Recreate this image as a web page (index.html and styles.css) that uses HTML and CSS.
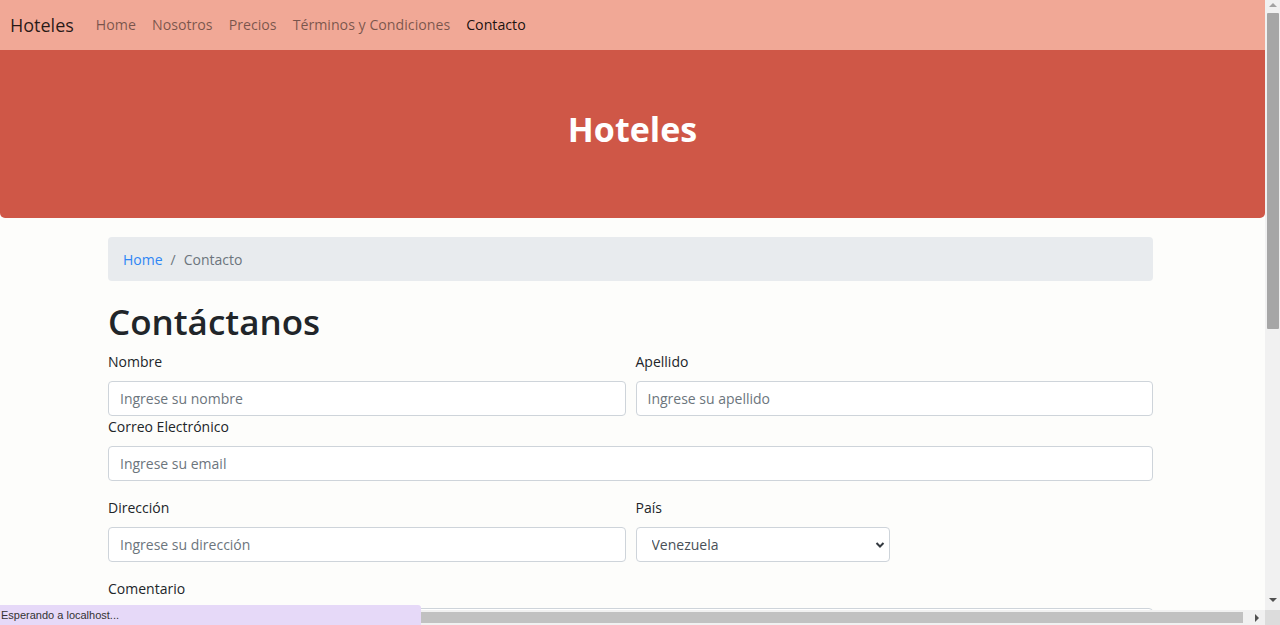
FILE: index.html
```html
<!DOCTYPE html>
<html lang="es">
<head>
<meta charset="utf-8">
<title>Hoteles - Contacto</title>
<link rel="stylesheet" href="styles.css">
</head>
<body>
<div class="window">
  <div class="viewport">
    <nav class="navbar">
      <a class="brand" href="#">Hoteles</a>
      <ul class="nav">
        <li><a class="nav-link" href="#">Home</a></li>
        <li><a class="nav-link" href="#">Nosotros</a></li>
        <li><a class="nav-link" href="#">Precios</a></li>
        <li><a class="nav-link" href="#">Términos y Condiciones</a></li>
        <li><a class="nav-link active" href="#">Contacto</a></li>
      </ul>
    </nav>
    <header class="hero">
      <h1 class="hero-title">Hoteles</h1>
    </header>
    <main class="container">
      <ol class="breadcrumb">
        <li><a href="#">Home</a></li>
        <li class="sep">/</li>
        <li class="current">Contacto</li>
      </ol>
      <h1 class="page-title">Contáctanos</h1>
      <form class="form">
        <div class="row">
          <div class="field">
            <label for="nombre">Nombre</label>
            <input id="nombre" type="text" placeholder="Ingrese su nombre">
          </div>
          <div class="field">
            <label for="apellido">Apellido</label>
            <input id="apellido" type="text" placeholder="Ingrese su apellido">
          </div>
        </div>
        <div class="field">
          <label for="email">Correo Electrónico</label>
          <input id="email" type="email" placeholder="Ingrese su email">
        </div>
        <div class="row group">
          <div class="field">
            <label for="direccion">Dirección</label>
            <input id="direccion" type="text" placeholder="Ingrese su dirección">
          </div>
          <div class="field">
            <label for="pais">País</label>
            <div class="select-wrap">
              <select id="pais">
                <option>Venezuela</option>
                <option>Colombia</option>
                <option>México</option>
              </select>
              <svg class="chev" width="10" height="8" viewBox="0 0 10 8"><path d="M1.5 2 L5 5.5 L8.5 2" fill="none" stroke="#343a40" stroke-width="2"/></svg>
            </div>
          </div>
        </div>
        <div class="field group">
          <label for="comentario">Comentario</label>
          <textarea id="comentario" rows="4"></textarea>
        </div>
      </form>
    </main>
  </div>
  <div class="vscroll">
    <span class="arrow up"></span>
    <span class="vthumb"></span>
    <span class="arrow down"></span>
  </div>
  <div class="hscroll">
    <span class="hthumb"></span>
    <span class="arrow right"></span>
  </div>
  <div class="corner"></div>
</div>
<div class="status">Esperando a localhost...</div>
</body>
</html>
```
FILE: styles.css
```css
* { box-sizing: border-box; }
html, body { margin: 0; padding: 0; height: 625px; overflow: hidden; }
body {
  font-family: "Open Sans", "Noto Sans", sans-serif;
  font-size: 14px;
  color: #212529;
  background: #fdfdfb;
}
.window {
  display: grid;
  grid-template-columns: 1265px 15px;
  grid-template-rows: 610px 15px;
  height: 625px;
}
.viewport { overflow: hidden; background: #fdfdfb; }

/* navbar */
.navbar {
  height: 50px;
  background: #f1a896;
  display: flex;
  align-items: center;
  padding: 0 10px 1px;
}
.brand {
  font-size: 18px;
  color: rgba(0,0,0,.85);
  text-decoration: none;
  margin-right: 14px;
}
.nav { list-style: none; margin: 0; padding: 0; display: flex; }
.nav-link {
  display: block;
  padding: 0 8px;
  color: rgba(0,0,0,.5);
  text-decoration: none;
  font-size: 14.2px;
}
.nav-link.active { color: rgba(0,0,0,.9); }

/* hero */
.hero {
  height: 168px;
  background: #cf5747;
  border-radius: 0 0 5px 5px;
  display: flex;
  align-items: center;
  justify-content: center;
  padding-bottom: 10px;
}
.hero-title {
  margin: 0;
  color: #fff;
  font-size: 34px;
  font-weight: 700;
}

/* container */
.container { width: 1045px; margin-left: 108px; }
.breadcrumb {
  list-style: none;
  margin: 19px 0 0;
  height: 44px;
  padding: 0 15px;
  background: #e8ebee;
  border-radius: 4px;
  display: flex;
  align-items: center;
  gap: 8px;
}
.breadcrumb a { color: #2f86f5; text-decoration: none; }
.breadcrumb .sep, .breadcrumb .current { color: #6c757d; }

.page-title {
  margin: 18px 0 7px;
  font-size: 35px;
  line-height: 45px;
  font-weight: 600;
  color: #212529;
}

.row { display: grid; grid-template-columns: 1fr 1fr; gap: 10px; }
.field { display: flex; flex-direction: column; }
.group { margin-top: 16px; }
label {
  display: block;
  line-height: 22px;
  margin-bottom: 8px;
  color: #212529;
}
input, textarea, select {
  font-family: inherit;
  font-size: 14px;
  color: #495057;
  background: #fff;
  border: 1px solid #ced4da;
  border-radius: 4px;
  outline: none;
}
input { height: 35px; padding: 0 11px; }
input::placeholder { color: #6c757d; }
textarea { height: 100px; resize: none; }
.select-wrap { position: relative; width: 254px; }
select {
  appearance: none;
  -webkit-appearance: none;
  width: 100%;
  height: 35px;
  padding: 0 15px;
}
.chev { position: absolute; right: 5px; top: 14px; }

/* fake scrollbars */
.vscroll {
  background: #f1f1f1;
  display: flex;
  flex-direction: column;
  align-items: center;
  padding: 3px 0;
}
.vthumb {
  width: 12px;
  height: 316px;
  margin-top: 6px;
  background: #a6a6a6;
  border-radius: 1px;
}
.arrow { width: 0; height: 0; border: 4px solid transparent; }
.arrow.up { border-bottom-color: #a3a3a3; border-top-width: 0; }
.arrow.down { border-top-color: #505050; border-bottom-width: 0; margin-top: auto; margin-bottom: 5px; }
.hscroll {
  background: #f1f1f1;
  display: flex;
  align-items: center;
  padding: 0 6px 0 0;
}
.hthumb {
  height: 11px;
  flex: 0 0 1243px;
  background: #c1c1c1;
}
.arrow.right { border-left-color: #505050; border-right-width: 0; margin-left: auto; }
.corner { background: #dcdcdc; }

.status {
  position: fixed;
  left: 0;
  bottom: 0;
  width: 421px;
  height: 20px;
  background: #e6d9f8;
  border-top-right-radius: 3px;
  font-family: "Liberation Sans", "Noto Sans", sans-serif;
  font-size: 11px;
  line-height: 20px;
  padding-left: 1px;
  color: #333;
}
```
